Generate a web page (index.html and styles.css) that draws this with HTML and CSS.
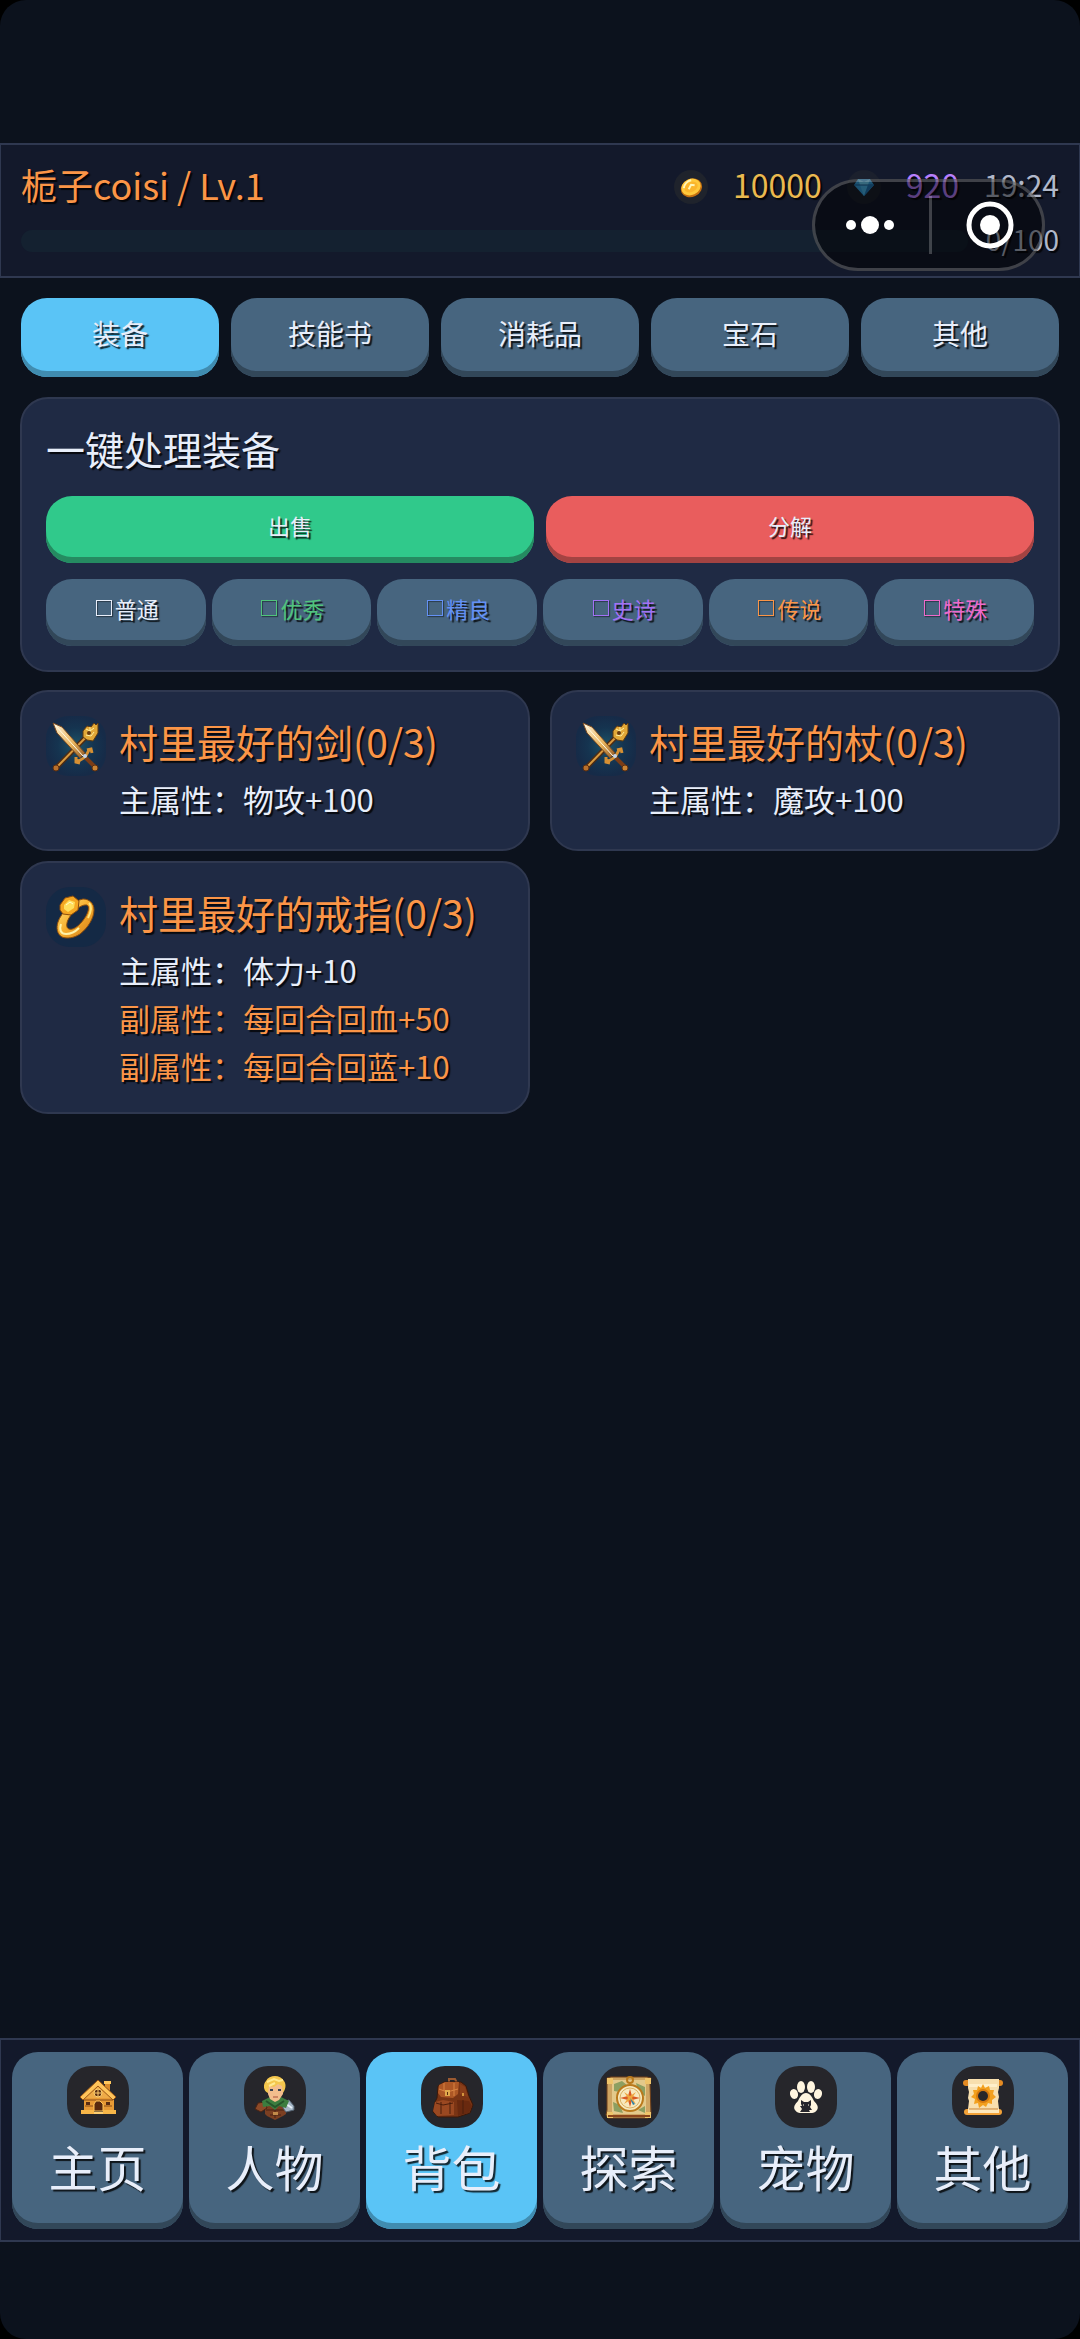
FILE: index.html
```html
<!DOCTYPE html>
<html lang="zh-CN">
<head>
<meta charset="utf-8">
<meta name="viewport" content="width=device-width, initial-scale=1">
<title>背包</title>
<link rel="stylesheet" href="styles.css">
</head>
<body>
<svg class="sprites" aria-hidden="true">
  <defs>
    <linearGradient id="gold" x1="0" y1="0" x2="1" y2="1">
      <stop offset="0" stop-color="#ffe680"/><stop offset=".5" stop-color="#f7ae2c"/><stop offset="1" stop-color="#d07a1a"/>
    </linearGradient>
    <linearGradient id="blade" x1="0" y1="0" x2="1" y2="1">
      <stop offset="0" stop-color="#fff3d8"/><stop offset=".6" stop-color="#e9b45c"/><stop offset="1" stop-color="#8c5524"/>
    </linearGradient>
    <radialGradient id="glow">
      <stop offset="0" stop-color="#1d5468"/><stop offset=".6" stop-color="#153450"/><stop offset="1" stop-color="#162b48"/>
    </radialGradient>
    <symbol id="weapon" viewBox="0 0 60 60">
      <rect width="60" height="60" rx="22" fill="url(#glow)"/>
      <path d="M10 52 44 17" stroke="#4e2c14" stroke-width="5" stroke-linecap="round"/>
      <path d="M10 52 44 17" stroke="#d99a3e" stroke-width="2" stroke-linecap="round"/>
      <path d="M37 15l4-5 4 1 3-4 2 2 2-2v10l-5 8-6-1-4-3z" fill="#e2a837" stroke="#5f3a12"/>
      <path d="M40 13l4 2 4-3M40 19l5 1 3-4M44 11v8" stroke="#fff0a0" fill="none"/>
      <circle cx="43" cy="17" r="2" fill="#6b3c10"/>
      <path d="M7 7l9 4 23 26-5 5L11 17z" fill="url(#blade)" stroke="#7a4a20"/>
      <path d="M9 9l28 31" stroke="#fffbe9"/>
      <path d="M40 42l9 9" stroke="#7b3d17" stroke-width="4"/>
      <path d="M30 45c5 0 10-4 13-11M30 41v5l4 1M41 34l4-1 1 4" stroke="#d69033" stroke-width="3" fill="none"/>
      <circle cx="39" cy="40" r="2" fill="#c9d7e8"/>
      <circle cx="49" cy="52" r="3" fill="#c98335" stroke="#5b2e10"/>
      <circle cx="10" cy="52" r="3" fill="#b8702b" stroke="#5b2e10"/>
    </symbol>
    <symbol id="ring" viewBox="0 0 60 60">
      <rect width="60" height="60" rx="24" fill="#142945"/>
      <path fill-rule="evenodd" d="M37 12c6 0 11 4 11 11 0 8-6 18-14 24-6 4-13 5-18 3-5-3-6-9-4-15 3-9 14-21 25-23zM41 18c-6-1-14 6-18 13-3 5-3 10 0 11 5 2 13-6 17-13 2-4 4-9 1-11z" fill="url(#gold)" stroke="#8d4d0c"/>
      <path d="M15 37c-2 6 0 10 5 10s9-2 13-6" stroke="#fff2a8" stroke-width="2" fill="none"/>
      <path d="M43 16c3 3 2 9-1 15" stroke="#ffe680" stroke-width="2" fill="none"/>
      <path d="M14 18l5-7 8-2 6 5-1 9-7 5-8-1-3-4z" fill="#f5a722" stroke="#8d4d0c"/>
      <path d="M18 18l5-5 6 2-1 6-6 4-4-3z" fill="#ffdf5c"/>
      <path d="M20 18l4-3 3 2" stroke="#fffbd0" fill="none"/>
    </symbol>
    <symbol id="coin" viewBox="0 0 34 34">
      <circle cx="17" cy="17" r="17" fill="#1f232c"/>
      <g transform="rotate(-25 17 17)">
        <ellipse cx="17" cy="18" rx="11" ry="9" fill="#c46f10"/>
        <ellipse cx="17" cy="17" rx="10" ry="8" fill="#ffc93c"/>
        <ellipse cx="17" cy="17" rx="7" ry="5" fill="#fbb52c"/>
        <path d="M10 15c2-3 6-5 10-4M14 18l4-3 3 2" stroke="#fff6b8" stroke-width="2" fill="none"/>
      </g>
    </symbol>
    <symbol id="gem" viewBox="0 0 34 34">
      <circle cx="17" cy="17" r="17" fill="#1b202d"/>
      <path d="M11 9h12l4 6-10 11L7 15z" fill="#35a2e2"/>
      <path d="M11 9l6 3 6-3-2 6h-8z" fill="#6ed2fb"/>
      <path d="M13 15h8l-4 11z" fill="#4ab8ee"/>
      <path d="M7 15h20" stroke="#1a5f96"/>
      <path d="M21 15h6L17 26z" fill="#2279b8"/>
    </symbol>
    <symbol id="home" viewBox="0 0 62 62">
      <path d="M38 16h5v9l-5-4z" fill="#d98a2b"/><path d="M37 15h7v3h-7z" fill="#ffc65c"/>
      <path d="M17 30h30v15H17z" fill="#e79a35"/>
      <path d="M31 17l14 15H18z" fill="#eeaa47"/>
      <path d="M31 14l18 17-3 3-15-14-15 14-3-3z" fill="#ffc45a" stroke="#9a5515"/>
      <circle cx="31" cy="27" r="4" fill="#5a2d12" stroke="#ffce6e"/><path d="M31 23v8M27 27h8" stroke="#ffce6e"/>
      <path d="M17 34h29M18 40h8M37 40h8" stroke="#8c4d18"/>
      <path d="M27 45v-7l2-3h4l3 3v7z" fill="#57290f" stroke="#ffc45a"/>
      <path d="M19 36h4v3h-4zM39 36h4v3h-4z" fill="#5a2d12"/>
      <path d="M14 44h13v4H14zM36 44h13v4H36z" fill="#f8b648"/><path d="M27 46h9v2h-9z" fill="#ffcf70"/>
    </symbol>
    <symbol id="hero" viewBox="0 0 62 62">
      <path d="M21 40h21v8l-3 2-8 4-8-4-2-2z" fill="#7b3f22"/>
      <path d="M22 44h18M26 49h11M31 42v10" stroke="#4a2313"/><path d="M29 46h5v3h-5z" fill="#c28a4a"/>
      <path d="M11 43l3-6 7-1 2 6-6 4z" fill="#8d4a28" stroke="#4a2313"/>
      <path d="M39 36l6-2 5 6v4l-8 2-3-4z" fill="#a5b6c6" stroke="#53616f"/><path d="M42 38l6 4" stroke="#e8f2fa" stroke-width="2"/>
      <path d="M18 35l8-4h11l8 4-3 7-7-2-4 4-5-4-7 1z" fill="#3c7d3f"/><path d="M22 35l9 6 9-6" stroke="#25552c" stroke-width="2" fill="none"/>
      <path d="M24 18h15v10l-4 6-4 2-5-3-2-5z" fill="#f3bd8d"/>
      <path d="M24 27c-5-2-5-9-2-12 3-6 14-7 18 0 3 4 1 9-1 12l-1-7-4-2-4 3-5-1z" fill="#f4c64d"/>
      <path d="M23 16l7-3 5 2 4-1M25 20l6-3" stroke="#ffea91" stroke-width="2" fill="none"/>
      <path d="M26 24h3M34 24h3" stroke="#39404d" stroke-width="2"/><path d="M29 31h5" stroke="#a84f38"/>
    </symbol>
    <symbol id="pack" viewBox="0 0 62 62">
      <path d="M28 17v-4h6l2 4" stroke="#9b5a31" stroke-width="2" fill="none"/>
      <path d="M17 20l6-4h17l5 4 3 10 4 9-3 8-12 4H17l-5-5 2-10 2-4z" fill="#7a3414" stroke="#3a180a"/>
      <path d="M18 19l6-3h14l-1 12-5 4-12-1-3-4z" fill="#ad5725"/>
      <path d="M18 23l8 3 11-3M23 17v8M33 17v13" stroke="#d98443" fill="none"/>
      <path d="M39 18l5 3 3 10-8-3z" fill="#8a3e19"/>
      <path d="M14 36l8-2 11 2v13l-17 1-4-5z" fill="#9a4821"/><path d="M36 34l12 1 3 5-3 7-11 3z" fill="#69290f"/>
      <path d="M15 37l7 2 10-2M20 36v12M29 36v12M42 34v14" stroke="#4b1e0c" fill="none"/>
      <path d="M24 24h5v6h-5z" fill="#e0a84c"/><path d="M26 26h1v3h-1z" fill="#5b2a0e"/><path d="M41 27h2v3h-2z" fill="#d2943e"/>
    </symbol>
    <symbol id="map" viewBox="0 0 62 62">
      <path d="M9 12l4-1h36l4 1-1 6 1 30-3 4H10l-2-3 1-5z" fill="#cfa562" stroke="#70401a"/>
      <path d="M14 14h34v34H14z" fill="#e3c98b"/>
      <path d="M16 18l8-3 6 5-8 6-6-1zM38 17l9 4v9l-7-5zM15 36l7 3 3 8-9-2zM40 44l7-4v7z" fill="#8d9f61"/>
      <path d="M9 12h6v6H9zM47 12h6v6h-6zM9 46h6v6H9zM47 46h6v6h-6z" fill="#efc46a"/>
      <path d="M10 50h42" stroke="#8b451b" stroke-width="2"/>
      <circle cx="32" cy="14" r="3" fill="none" stroke="#b9791c" stroke-width="2"/>
      <circle cx="32" cy="32" r="13" fill="#f7e8bd" stroke="#b9791c" stroke-width="2"/>
      <circle cx="32" cy="32" r="10" fill="none" stroke="#d9b062"/>
      <path d="M32 23l2 7 8 2-8 2-2 7-2-7-8-2 8-2z" fill="#d95a23"/><path d="M26 26l6 4 6-4-4 6 4 6-6-4-6 4 4-6z" fill="#efa43b"/>
      <path d="M32 32l5 6-2 1z" fill="#2a7fa5"/>
    </symbol>
    <symbol id="paw" viewBox="0 0 62 62">
      <g fill="#fff5df">
        <ellipse cx="19" cy="28" rx="4" ry="5" transform="rotate(-15 19 28)"/><ellipse cx="26" cy="21" rx="4" ry="6"/>
        <ellipse cx="36" cy="21" rx="4" ry="6"/><ellipse cx="43" cy="28" rx="4" ry="5" transform="rotate(15 43 28)"/>
        <path d="M31 27c4 0 6 4 8 8 3 3 5 6 3 9-2 4-7 3-11 3s-9 1-11-3c-2-3 0-6 3-9 2-4 4-8 8-8z"/>
      </g>
      <path d="M26 34l3 2h4l3-2v5l-1 2 2 3h-3l1 2H25l2-3-2-3h2l-1-2z" fill="#26252b"/><path d="M28 39h1M33 39h1" stroke="#fff5df"/>
    </symbol>
    <symbol id="scroll" viewBox="0 0 62 62">
      <rect x="11" y="14" width="40" height="6" rx="3" fill="#e58b22"/><rect x="12" y="43" width="38" height="6" rx="3" fill="#f3a238"/>
      <path d="M16 13h31v9l-1 4 1 5-1 4 1 8H16l1-8-1-3 1-6-1-4z" fill="#f8dfae"/>
      <path d="M17 18h28v3H17z" fill="#ffefca"/><path d="M16 43h31v4H16z" fill="#ffe9bc"/><path d="M17 43h29" stroke="#c98336"/>
      <path d="M31 18l2 4 4-2 1 4h4l-1 4 3 3-4 3v4l-4-1-2 4-3-2-4 3-1-5-4 1 1-5-4-2 3-3-1-4h4l1-4 3 2z" fill="#f3a01e"/>
      <circle cx="31" cy="30" r="7" fill="#d67a10"/><circle cx="31" cy="30" r="5" fill="#29262a"/>
    </symbol>
  </defs>
</svg>

<header class="status">
  <div class="status-row">
    <h1 class="player">栀子coisi / Lv.1</h1>
    <div class="wallet">
      <svg class="coin-icon" role="img" aria-label="金币"><use href="#coin"/></svg>
      <span class="gold">10000</span>
      <svg class="coin-icon" role="img" aria-label="钻石"><use href="#gem"/></svg>
      <span class="gems">920</span>
      <time class="clock">19:24</time>
    </div>
  </div>
  <div class="exp-row">
    <progress class="exp-bar" value="0" max="100" aria-label="经验"></progress>
    <span class="exp-text">0/100</span>
  </div>
  <div class="capsule">
    <button class="capsule-btn" type="button" aria-label="更多">
      <svg width="50" height="20" viewBox="0 0 50 20" fill="#fff"><circle cx="6" cy="10" r="5"/><circle cx="25" cy="10" r="9"/><circle cx="44" cy="10" r="5"/></svg>
    </button>
    <button class="capsule-btn" type="button" aria-label="关闭">
      <svg width="50" height="50" viewBox="0 0 50 50"><circle cx="25" cy="25" r="21" fill="none" stroke="#fff" stroke-width="5"/><circle cx="25" cy="25" r="10" fill="#fff"/></svg>
    </button>
  </div>
</header>

<main class="bag">
  <nav class="tabs" aria-label="分类">
    <button class="btn tab active" type="button">装备</button>
    <button class="btn tab" type="button">技能书</button>
    <button class="btn tab" type="button">消耗品</button>
    <button class="btn tab" type="button">宝石</button>
    <button class="btn tab" type="button">其他</button>
  </nav>

  <section class="card batch">
    <h2 class="title">一键处理装备</h2>
    <div class="actions">
      <button class="btn small sell" type="button">出售</button>
      <button class="btn small salvage" type="button">分解</button>
    </div>
    <div class="filters">
      <label class="btn small"><input class="tick" type="checkbox">普通</label>
      <label class="btn small fine"><input class="tick" type="checkbox">优秀</label>
      <label class="btn small rare"><input class="tick" type="checkbox">精良</label>
      <label class="btn small epic"><input class="tick" type="checkbox">史诗</label>
      <label class="btn small legend"><input class="tick" type="checkbox">传说</label>
      <label class="btn small special"><input class="tick" type="checkbox">特殊</label>
    </div>
  </section>

  <section class="items" aria-label="装备列表">
    <article class="card item">
      <svg class="item-icon" aria-hidden="true"><use href="#weapon"/></svg>
      <div class="item-body">
        <h2 class="title legend">村里最好的剑(0/3)</h2>
        <p class="stat">主属性：物攻+100</p>
      </div>
    </article>
    <article class="card item">
      <svg class="item-icon" aria-hidden="true"><use href="#weapon"/></svg>
      <div class="item-body">
        <h2 class="title legend">村里最好的杖(0/3)</h2>
        <p class="stat">主属性：魔攻+100</p>
      </div>
    </article>
    <article class="card item">
      <svg class="item-icon" aria-hidden="true"><use href="#ring"/></svg>
      <div class="item-body">
        <h2 class="title legend">村里最好的戒指(0/3)</h2>
        <p class="stat">主属性：体力+10</p>
        <p class="stat legend">副属性：每回合回血+50</p>
        <p class="stat legend">副属性：每回合回蓝+10</p>
      </div>
    </article>
  </section>
</main>

<nav class="dock" aria-label="主导航">
  <button class="btn dock-btn" type="button"><svg class="dock-icon" aria-hidden="true"><use href="#home"/></svg>主页</button>
  <button class="btn dock-btn" type="button"><svg class="dock-icon" aria-hidden="true"><use href="#hero"/></svg>人物</button>
  <button class="btn dock-btn active" type="button"><svg class="dock-icon" aria-hidden="true"><use href="#pack"/></svg>背包</button>
  <button class="btn dock-btn" type="button"><svg class="dock-icon" aria-hidden="true"><use href="#map"/></svg>探索</button>
  <button class="btn dock-btn" type="button"><svg class="dock-icon" aria-hidden="true"><use href="#paw"/></svg>宠物</button>
  <button class="btn dock-btn" type="button"><svg class="dock-icon" aria-hidden="true"><use href="#scroll"/></svg>其他</button>
</nav>
</body>
</html>
```
FILE: styles.css
```css
:root {
  --bg: #0c121d;
  --bar: #13192b;
  --card: #1f2a44;
  --line: #2f3850;
  --text: #e8eefa;
  --muted: #b0b8ca;
  --slate: #47657f;
  --slate-edge: #324759;
  --orange: #fb9547;
}

* {
  box-sizing: border-box;
}

html {
  background: #000;
}

body {
  display: flex;
  flex-direction: column;
  min-height: 100vh;
  margin: 0;
  padding: 143px 0 97px;
  border-radius: 26px;
  background: var(--bg);
  color: var(--text);
  font-family: "Noto Sans CJK SC", "Noto Sans", sans-serif;
  text-shadow: 2px 2px 1px rgba(0, 0, 0, 0.8);
}

h1,
h2,
p {
  margin: 0;
  font-weight: 400;
}

.sprites {
  position: absolute;
  width: 0;
  height: 0;
}

/* Top status bar */
.status {
  position: relative;
  display: flex;
  flex-direction: column;
  gap: 8px;
  padding: 17px 20px 14px;
  border: solid var(--line);
  border-width: 2px 1px;
  background: var(--bar);
}

.status-row,
.exp-row,
.wallet {
  display: flex;
  align-items: center;
}

.status-row {
  justify-content: space-between;
  height: 50px;
  line-height: 44px;
}

.player,
.wallet span,
.clock {
  padding-bottom: 6px;
}

.player {
  color: var(--orange);
  font-size: 36px;
}

.wallet {
  gap: 25px;
  font-size: 32px;
}

.coin-icon {
  width: 34px;
  height: 34px;
}

.gold {
  color: #eab94f;
}

.gems {
  color: #b67ffc;
}

.clock {
  color: var(--muted);
  font-size: 30px;
}

.exp-row {
  gap: 18px;
  height: 42px;
  line-height: 38px;
}

.exp-bar {
  flex: 1;
  height: 22px;
  border: 0;
  border-radius: 11px;
  background: #142130;
  appearance: none;
  overflow: hidden;
}

.exp-bar::-webkit-progress-bar {
  background: #142130;
}

.exp-bar::-webkit-progress-value {
  background: #3ec98a;
}

.exp-text {
  padding-bottom: 4px;
  color: var(--muted);
  font-size: 28px;
}

.capsule {
  position: absolute;
  top: 34px;
  right: 34px;
  display: flex;
  width: 233px;
  height: 92px;
  border: 3px solid rgba(255, 255, 255, 0.22);
  border-radius: 46px;
  background: rgba(0, 0, 0, 0.5);
}

.capsule-btn {
  display: flex;
  flex: 1;
  align-items: center;
  justify-content: center;
  padding: 0 3px 0 0;
  border: 0;
  background: none;
}

.capsule-btn + .capsule-btn::before {
  content: "";
  width: 3px;
  height: 58px;
  margin-right: 33px;
  background: rgba(255, 255, 255, 0.22);
}

.capsule-btn + .capsule-btn {
  justify-content: flex-start;
}

/* Buttons */
.btn {
  display: flex;
  align-items: center;
  justify-content: center;
  padding: 0 0 10px;
  border: 0;
  border-radius: 26px;
  background: var(--slate);
  box-shadow: inset 0 -6px var(--slate-edge);
  color: var(--text);
  font-family: inherit;
  text-shadow: inherit;
  cursor: pointer;
}

.active {
  background: #5ac4f6;
  box-shadow: inset 0 -6px #408cb0;
}

.small {
  height: 67px;
  font-size: 22px;
}

.sell {
  background: #30c98b;
  box-shadow: inset 0 -6px #258b61;
}

.salvage {
  background: #e95d5d;
  box-shadow: inset 0 -6px #a34342;
}

/* Quality colours */
.fine {
  color: #50c47c;
}

.rare {
  color: #6491f5;
}

.epic {
  color: #a272f5;
}

.legend {
  color: var(--orange);
}

.special {
  color: #ee6acb;
}

/* Bag contents */
.bag {
  display: flex;
  flex: 1;
  flex-direction: column;
  padding: 20px;
}

.tabs {
  display: grid;
  grid-template-columns: repeat(5, 1fr);
  gap: 12px;
  margin: 0 1px 20px;
}

.tab {
  height: 79px;
  font-size: 28px;
}

.card {
  padding: 24px;
  border: 2px solid var(--line);
  border-radius: 28px;
  background: var(--card);
}

.title {
  padding-bottom: 6px;
  font-size: 39px;
  line-height: 51px;
}

.batch {
  display: flex;
  flex-direction: column;
  gap: 16px;
  margin-bottom: 18px;
}

.actions {
  display: grid;
  grid-template-columns: repeat(2, 1fr);
  gap: 12px;
}

.filters {
  display: grid;
  grid-template-columns: repeat(6, 1fr);
  gap: 6px;
}

.tick {
  width: 16px;
  height: 16px;
  margin: 0 3px;
  border: 1px solid currentColor;
  box-shadow: 1px 1px 1px rgba(0, 0, 0, 0.4), inset 1px 1px 1px rgba(0, 0, 0, 0.4);
  color: inherit;
  appearance: none;
}

.tick:checked {
  background: currentColor;
}

.items {
  display: grid;
  grid-template-columns: repeat(2, 1fr);
  gap: 10px 20px;
}

.item {
  display: flex;
  gap: 13px;
  min-height: 161px;
}

.item-icon {
  flex: none;
  width: 60px;
  height: 60px;
}

.item-body {
  display: flex;
  flex-direction: column;
  gap: 4px;
}

.stat {
  font-size: 31px;
  line-height: 44px;
}

/* Bottom navigation */
.dock {
  display: grid;
  grid-template-columns: repeat(6, 1fr);
  gap: 6px;
  padding: 12px 11px 11px;
  border: solid var(--line);
  border-width: 2px 1px;
  background: var(--bar);
}

.dock-btn {
  flex-direction: column;
  gap: 7px;
  padding: 14px 0 32px;
  font-size: 49px;
  line-height: 62px;
}

.dock-icon {
  width: 62px;
  height: 62px;
  border-radius: 24px;
  background: #26262b;
}
```
